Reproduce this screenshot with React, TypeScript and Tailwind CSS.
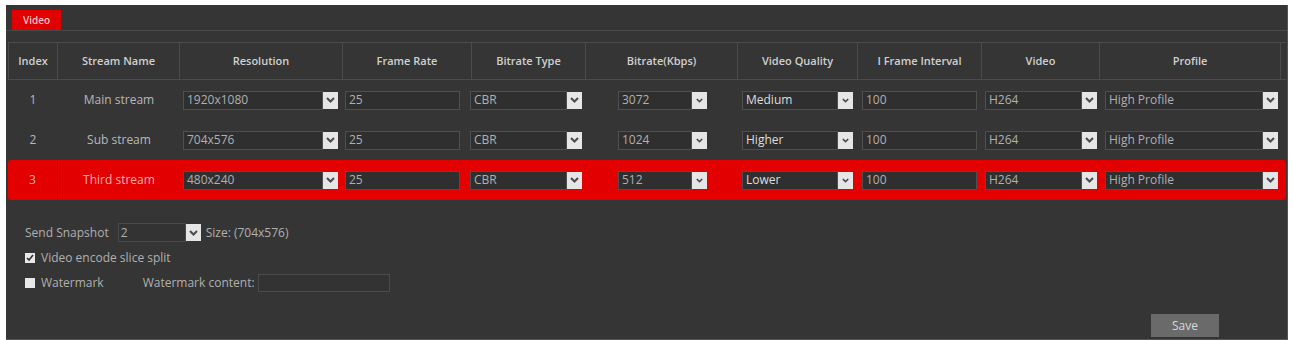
import React from "react";

type Row = {
  index: string;
  name: string;
  resolution: string;
  frameRate: string;
  bitrateType: string;
  bitrate: string;
  quality: string;
  iframe: string;
  video: string;
  profile: string;
  active?: boolean;
};

const rows: Row[] = [
  {
    index: "1",
    name: "Main stream",
    resolution: "1920x1080",
    frameRate: "25",
    bitrateType: "CBR",
    bitrate: "3072",
    quality: "Medium",
    iframe: "100",
    video: "H264",
    profile: "High Profile",
  },
  {
    index: "2",
    name: "Sub stream",
    resolution: "704x576",
    frameRate: "25",
    bitrateType: "CBR",
    bitrate: "1024",
    quality: "Higher",
    iframe: "100",
    video: "H264",
    profile: "High Profile",
  },
  {
    index: "3",
    name: "Third stream",
    resolution: "480x240",
    frameRate: "25",
    bitrateType: "CBR",
    bitrate: "512",
    quality: "Lower",
    iframe: "100",
    video: "H264",
    profile: "High Profile",
    active: true,
  },
];

const headers = [
  "Index",
  "Stream Name",
  "Resolution",
  "Frame Rate",
  "Bitrate Type",
  "Bitrate(Kbps)",
  "Video Quality",
  "I Frame Interval",
  "Video",
  "Profile",
];

const cols = "grid grid-cols-[50px_122px_163px_129px_114px_152px_120px_124px_118px_181px_1fr]";

function Arrow({ small }: { small?: boolean }) {
  return (
    <span className="flex h-[17px] w-[15px] shrink-0 items-center justify-center bg-[#e6e6e6]">
      <svg width={small ? 7 : 9} height={small ? 5 : 6} viewBox="0 0 9 6">
        <path d="M1 1l3.5 3.5L8 1" fill="none" stroke="#4a4a4a" strokeWidth="2" />
      </svg>
    </span>
  );
}

function Select({
  value,
  className,
  bright,
  small,
}: {
  value: string;
  className: string;
  bright?: boolean;
  small?: boolean;
}) {
  return (
    <div className={`flex h-[19px] items-center ${className}`}>
      <div
        className={`flex h-full flex-1 items-center border border-[#4f4f4f] bg-[#2f2f2f] pl-[3px] text-[12px] ${
          bright ? "font-medium text-[#dedede]" : "text-[#b0b0b0]"
        }`}
      >
        {value}
      </div>
      <Arrow small={small} />
    </div>
  );
}

function TextBox({ value, className }: { value: string; className: string }) {
  return (
    <div
      className={`flex h-[19px] items-center border border-[#4f4f4f] bg-[#2f2f2f] pl-[3px] text-[12px] text-[#b0b0b0] ${className}`}
    >
      {value}
    </div>
  );
}

function StreamRow({ row }: { row: Row }) {
  return (
    <div
      className={`${cols} h-[40px] items-center ${
        row.active ? "rounded-[3px] bg-[#e20000]" : ""
      }`}
    >
      <div
        className={`flex h-full items-center justify-center text-[12px] ${
          row.active ? "border-r border-[#c80000] text-[#f3b0b0]" : "text-[#b8b8b8]"
        }`}
      >
        {row.index}
      </div>
      <div
        className={`text-center text-[12px] ${row.active ? "text-[#f3b0b0]" : "text-[#b8b8b8]"}`}
      >
        {row.name}
      </div>
      <Select value={row.resolution} className="ml-[3px] mr-[5px]" />
      <TextBox value={row.frameRate} className="ml-[2px] mr-[12px]" />
      <Select value={row.bitrateType} className="ml-[-2px] mr-[4px]" />
      <Select value={row.bitrate} className="ml-[32px] mr-[31px]" small />
      <Select value={row.quality} className="ml-[4px] mr-[5px]" bright small />
      <TextBox value={row.iframe} className="ml-[4px] mr-[5px]" />
      <Select value={row.video} className="ml-[3px] mr-[3px]" />
      <Select value={row.profile} className="ml-[5px] mr-[3px]" />
      <div />
    </div>
  );
}

function CheckBox({ checked }: { checked?: boolean }) {
  return (
    <span className="flex h-[10px] w-[10px] items-center justify-center bg-[#e8e8e8]">
      {checked ? (
        <svg width="8" height="8" viewBox="0 0 8 8">
          <path d="M1 4l2 2 4-5" fill="none" stroke="#333" strokeWidth="1.6" />
        </svg>
      ) : null}
    </span>
  );
}

export default function App() {
  return (
    <div
      className="h-[340px] w-[1293px] bg-white pl-[6px] pr-[5px] pt-[5px]"
      style={{ fontFamily: '"Open Sans", "Noto Sans", sans-serif' }}
    >
      <div className="flex h-[335px] flex-col border-r border-b border-[#555] bg-[#353535]">
        <div className="flex h-[26px] items-end border-b border-[#4a4a4a] pl-[6px]">
          <div className="flex h-[20px] w-[49px] items-center justify-center bg-[#e00000] text-[10px] font-semibold text-[#f4c4c4]">
            Video
          </div>
        </div>

        <div className="mt-[11px] pl-[2px] pr-[1px]">
          <div className={`${cols} h-[38px] border-y border-[#4b4b4b]`}>
            {headers.map((h, i) => (
              <div
                key={h}
                className={`flex items-center justify-center text-[11px] font-semibold text-[#d0d0d0] ${
                  i === 0 ? "border-l border-[#4b4b4b]" : ""
                } border-r border-[#4b4b4b]`}
              >
                {h}
              </div>
            ))}
            <div />
          </div>
          {rows.map((r) => (
            <StreamRow key={r.index} row={r} />
          ))}
        </div>

        <div className="mt-[23px] flex flex-col gap-[7px] pl-[19px] text-[12px] text-[#b0b0b0]">
          <div className="flex h-[19px] items-center">
            <span>Send Snapshot</span>
            <div className="ml-[9px] flex h-[19px] items-center">
              <div className="flex h-full w-[68px] items-center border border-[#4a4a4a] bg-[#333] pl-[2px]">
                2
              </div>
              <Arrow />
            </div>
            <span className="ml-[5px]">Size: (704x576)</span>
          </div>
          <div className="flex h-[18px] items-center gap-[6px]">
            <CheckBox checked />
            <span>Video encode slice split</span>
          </div>
          <div className="flex h-[18px] items-center">
            <CheckBox />
            <span className="ml-[6px]">Watermark</span>
            <span className="ml-[39px]">Watermark content:</span>
            <div className="ml-[3px] h-[18px] w-[132px] border border-[#4a4a4a] bg-[#333]" />
          </div>
        </div>

        <div className="mt-auto mb-[2px] flex justify-end pr-[68px]">
          <button
            type="button"
            className="h-[23px] w-[68px] bg-[#6a6a6a] text-[12px] text-[#d8d8d8]"
          >
            Save
          </button>
        </div>
      </div>
    </div>
  );
}
